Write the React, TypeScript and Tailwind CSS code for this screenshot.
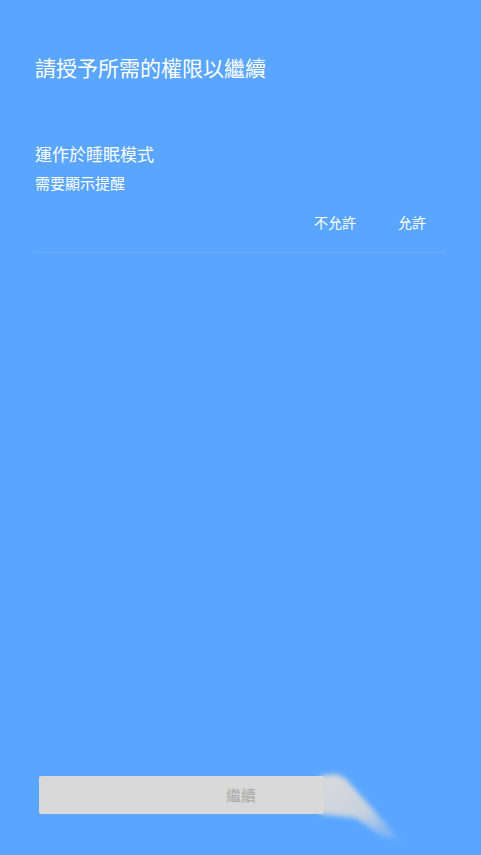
import React from "react";

export default function App() {
  const font = { fontFamily: '"Noto Sans CJK TC", "Noto Sans", sans-serif' };
  return (
    <div className="relative w-[481px] h-[855px] bg-[#5aa6fe] overflow-hidden flex flex-col" style={font}>
      <div className="px-[35px] pt-[53px]">
        <h1 className="text-[21px] leading-[29px] text-white font-normal">請授予所需的權限以繼續</h1>
      </div>
      <div className="px-[35px] pt-[60px]">
        <div className="text-[17px] leading-[24px] text-white">運作於睡眠模式</div>
        <div className="text-[15px] leading-[20px] text-white mt-[7px]">需要顯示提醒</div>
        <div className="flex justify-end gap-[42px] pr-[20px] mt-[19px] text-[14px] leading-[20px] text-white">
          <span>不允許</span>
          <span>允許</span>
        </div>
        <div className="mt-[20px] h-px bg-[#6cb0fd]" />
      </div>
      <div className="flex-1" />
      <div className="relative pl-[39px] pb-[41px]">
        <svg className="absolute left-[290px] top-[-10px]" width="150" height="90" viewBox="0 0 150 90">
          <defs>
            <filter id="b" x="-30%" y="-30%" width="160%" height="160%">
              <feGaussianBlur stdDeviation="2.5" />
            </filter>
            <linearGradient id="g" x1="0" y1="0" x2="1" y2="1">
              <stop offset="0" stopColor="#dadada" stopOpacity="1" />
              <stop offset="0.55" stopColor="#dadada" stopOpacity="0.85" />
              <stop offset="1" stopColor="#dadada" stopOpacity="0" />
            </linearGradient>
          </defs>
          <polygon points="30,10 45,8 55,12 112,76 92,70 66,52 30,48" fill="url(#g)" filter="url(#b)" />
        </svg>
        <div className="relative w-[285px] h-[38px] bg-[#d9d9d9] rounded-[2px] flex items-center">
          <span className="absolute left-[187px] text-[15px] text-[#a9a9a9]">繼續</span>
        </div>
      </div>
    </div>
  );
}
